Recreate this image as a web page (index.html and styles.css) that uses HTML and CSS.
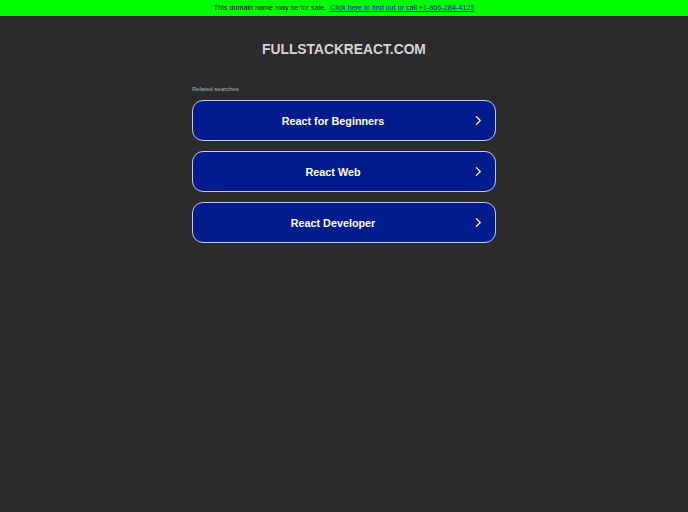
FILE: index.html
```html
<!DOCTYPE html>
<html>
<head>
<meta charset="utf-8">
<link rel="stylesheet" href="styles.css">
</head>
<body>
<div class="banner">This domain name may be for sale. &nbsp;<a href="#">Click here to find out or call +1-866-284-4125</a></div>
<h1 class="title">FULLSTACKREACT.COM</h1>
<main class="results">
  <div class="label">Related searches</div>
  <a class="btn" href="#"><span>React for Beginners</span><svg class="chev" viewBox="0 0 10 14" width="7" height="11"><path d="M2 1.5 L7.5 7 L2 12.5" fill="none" stroke="#fff" stroke-width="1.8" stroke-linecap="round" stroke-linejoin="round"/></svg></a>
  <a class="btn" href="#"><span>React Web</span><svg class="chev" viewBox="0 0 10 14" width="7" height="11"><path d="M2 1.5 L7.5 7 L2 12.5" fill="none" stroke="#fff" stroke-width="1.8" stroke-linecap="round" stroke-linejoin="round"/></svg></a>
  <a class="btn" href="#"><span>React Developer</span><svg class="chev" viewBox="0 0 10 14" width="7" height="11"><path d="M2 1.5 L7.5 7 L2 12.5" fill="none" stroke="#fff" stroke-width="1.8" stroke-linecap="round" stroke-linejoin="round"/></svg></a>
</main>
</body>
</html>
```
FILE: styles.css
```css
html, body { margin: 0; padding: 0; }
body {
  background: #2b2b2b;
  font-family: "Liberation Sans", Arial, sans-serif;
  min-height: 512px;
}
.banner {
  background: #00ff00;
  height: 16px;
  line-height: 16px;
  text-align: center;
  font-size: 7.2px;
  color: #000;
}
.banner a { color: #0000cc; text-decoration: underline; }
.title {
  margin: 0;
  padding-top: 26px;
  height: 21px;
  line-height: 16px;
  text-align: center;
  font-size: 13.8px;
  font-weight: bold;
  color: #d4d4d4;
}
.results {
  width: 304px;
  margin: 0 auto;
  padding-top: 22px;
  display: flex;
  flex-direction: column;
  gap: 10px;
}
.label {
  font-size: 6px;
  color: #b0b0b0;
  margin-bottom: -3px;
  line-height: 8px;
}
.btn {
  position: relative;
  box-sizing: border-box;
  display: flex;
  align-items: center;
  justify-content: center;
  height: 41px;
  padding-right: 22px;
  border: 1.5px solid #c4c6ec;
  border-radius: 11px;
  background: #021c8d;
  color: #fff;
  text-decoration: none;
  font-size: 10.8px;
  font-weight: bold;
}
.chev {
  position: absolute;
  right: 13px;
  top: 50%;
  margin-top: -5.5px;
}
```
